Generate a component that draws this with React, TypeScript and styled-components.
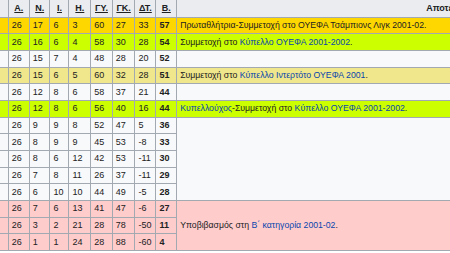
import React from "react";
import styled, { createGlobalStyle } from "styled-components";

const Global = createGlobalStyle`
  html, body { margin: 0; padding: 0; background: #ffffff; overflow: hidden; }
  #root { width: 450px; height: 253px; overflow: hidden; }
`;

type Tone = "gold" | "lime" | "khaki" | "pink" | "plain";

const toneColors: Record<Tone, string> = {
  gold: "#ffd700",
  lime: "#ccff00",
  khaki: "#f0e68c",
  pink: "#ffcccc",
  plain: "#f8f9fa",
};

const Table = styled.table`
  border-collapse: collapse;
  table-layout: fixed;
  width: 728px;
  font-family: "Liberation Sans", Arial, sans-serif;
  font-size: 9px;
  color: #202122;
  background: #f8f9fa;
`;

const HeadRow = styled.tr`
  height: 17px;
`;

const HeadCell = styled.th<{ $edge?: boolean }>`
  background: #eaecf0;
  border: 1px solid #a2a9b1;
  border-top: none;
  ${(p) => (p.$edge ? "border-left: none;" : "")}
  padding: 0 3px;
  font-weight: bold;
  text-align: center;
  vertical-align: middle;
  line-height: 11px;
  white-space: nowrap;
`;

const Abbr = styled.span`
  text-decoration: underline;
  color: #202122;
`;

const Row = styled.tr<{ $tone: Tone }>`
  height: 16.7px;
  background: ${(p) => toneColors[p.$tone]};
`;

const Cell = styled.td<{ $bold?: boolean }>`
  border: 1px solid #a2a9b1;
  padding: 0 3px;
  font-weight: ${(p) => (p.$bold ? "bold" : "normal")};
  text-align: left;
  vertical-align: middle;
  white-space: nowrap;
  line-height: 11px;
`;

const EdgeCell = styled.td`
  border: 1px solid #a2a9b1;
  border-left: none;
  padding: 0;
`;

const NoteCell = styled.td<{ $tone: Tone }>`
  border: 1px solid #a2a9b1;
  padding: 0 3px;
  font-size: 8.7px;
  text-align: left;
  vertical-align: middle;
  white-space: nowrap;
  line-height: 11px;
  background: ${(p) => toneColors[p.$tone]};
`;

const Link = styled.a`
  color: #0645ad;
  text-decoration: none;
`;

type Standing = {
  v: (number | string)[];
  tone: Tone;
};

const rows: Standing[] = [
  { v: [26, 17, 6, 3, 60, 27, 33, 57], tone: "gold" },
  { v: [26, 16, 6, 4, 58, 30, 28, 54], tone: "lime" },
  { v: [26, 15, 7, 4, 48, 28, 20, 52], tone: "plain" },
  { v: [26, 15, 6, 5, 60, 32, 28, 51], tone: "khaki" },
  { v: [26, 12, 8, 6, 58, 37, 21, 44], tone: "plain" },
  { v: [26, 12, 8, 6, 56, 40, 16, 44], tone: "lime" },
  { v: [26, 9, 9, 8, 52, 47, 5, 36], tone: "plain" },
  { v: [26, 8, 9, 9, 45, 53, -8, 33], tone: "plain" },
  { v: [26, 8, 6, 12, 42, 53, -11, 30], tone: "plain" },
  { v: [26, 7, 8, 11, 26, 37, -11, 29], tone: "plain" },
  { v: [26, 6, 10, 10, 44, 49, -5, 28], tone: "plain" },
  { v: [26, 7, 6, 13, 41, 47, -6, 27], tone: "pink" },
  { v: [26, 3, 2, 21, 28, 78, -50, 11], tone: "pink" },
  { v: [26, 1, 1, 24, 28, 88, -60, 4], tone: "pink" },
];

const notes: Record<number, { span: number; tone: Tone; content: React.ReactNode }> = {
  0: {
    span: 1,
    tone: "gold",
    content: <>Πρωταθλήτρια-Συμμετοχή στο ΟΥΕΦΑ Τσάμπιονς Λιγκ 2001-02.</>,
  },
  1: {
    span: 1,
    tone: "lime",
    content: (
      <>
        Συμμετοχή στο <Link href="#">Κύπελλο ΟΥΕΦΑ 2001-2002</Link>.
      </>
    ),
  },
  2: { span: 1, tone: "plain", content: null },
  3: {
    span: 1,
    tone: "khaki",
    content: (
      <>
        Συμμετοχή στο <Link href="#">Κύπελλο Ιντερτότο ΟΥΕΦΑ 2001</Link>.
      </>
    ),
  },
  4: { span: 1, tone: "plain", content: null },
  5: {
    span: 1,
    tone: "lime",
    content: (
      <>
        <Link href="#">Κυπελλούχος</Link>-Συμμετοχή στο{" "}
        <Link href="#">Κύπελλο ΟΥΕΦΑ 2001-2002</Link>.
      </>
    ),
  },
  6: { span: 5, tone: "plain", content: null },
  11: {
    span: 3,
    tone: "pink",
    content: (
      <>
        Υποβιβασμός στη <Link href="#">Β΄ κατηγορία 2001-02</Link>.
      </>
    ),
  },
};

const widths = [8.3, 21, 20.7, 19, 21.7, 21.6, 22.7, 21, 20.7, 552];
const heads = ["Α.", "Ν.", "Ι.", "Η.", "ΓΥ.", "ΓΚ.", "ΔΤ.", "Β."];

export default function App() {
  return (
    <>
      <Global />
      <Table>
        <colgroup>
          {widths.map((w, i) => (
            <col key={i} style={{ width: `${w}px` }} />
          ))}
        </colgroup>
        <thead>
          <HeadRow>
            <HeadCell $edge />
            {heads.map((h) => (
              <HeadCell key={h}>
                <Abbr>{h}</Abbr>
              </HeadCell>
            ))}
            <HeadCell>Αποτέλεσμα</HeadCell>
          </HeadRow>
        </thead>
        <tbody>
          {rows.map((r, i) => {
            const note = notes[i];
            return (
              <Row key={i} $tone={r.tone}>
                <EdgeCell />
                {r.v.map((x, j) => (
                  <Cell key={j} $bold={j === 7}>
                    {x}
                  </Cell>
                ))}
                {note && (
                  <NoteCell rowSpan={note.span} $tone={note.tone}>
                    {note.content}
                  </NoteCell>
                )}
              </Row>
            );
          })}
        </tbody>
      </Table>
    </>
  );
}
